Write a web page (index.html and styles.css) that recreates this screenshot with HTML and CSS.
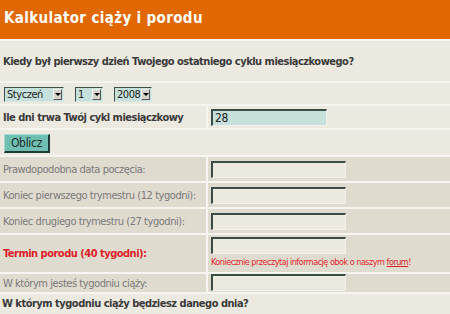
FILE: index.html
```html
<!DOCTYPE html>
<html lang="pl">
<head>
<meta charset="utf-8">
<title>Kalkulator ciąży i porodu</title>
<link rel="stylesheet" href="styles.css">
</head>
<body>
<div class="calc">
  <h1 class="head full">Kalkulator ciąży i porodu</h1>
  <div class="cell full q">Kiedy był pierwszy dzień Twojego ostatniego cyklu miesiączkowego?</div>
  <div class="cell full sels">
    <span class="sel w-month"><select class="sel-input"><option>Styczeń</option></select><span class="sel-arrow"><i></i></span></span>
    <span class="sel w-day"><select class="sel-input"><option>1</option></select><span class="sel-arrow"><i></i></span></span>
    <span class="sel w-year"><select class="sel-input"><option>2008</option></select><span class="sel-arrow"><i></i></span></span>
  </div>
  <div class="cell q lbl-cycle">Ile dni trwa Twój cykl miesiączkowy</div>
  <div class="cell val"><input class="inp inp-cycle" type="text" value="28"></div>
  <div class="cell full btn-row"><button class="btn" type="button">Oblicz</button></div>
  <div class="cell res lbl">Prawdopodobna data poczęcia:</div>
  <div class="cell res val"><input class="inp" type="text"></div>
  <div class="cell res lbl">Koniec pierwszego trymestru (12 tygodni):</div>
  <div class="cell res val"><input class="inp" type="text"></div>
  <div class="cell res lbl">Koniec drugiego trymestru (27 tygodni):</div>
  <div class="cell res val"><input class="inp" type="text"></div>
  <div class="cell res lbl lbl-red">Termin porodu (40 tygodni):</div>
  <div class="cell res val val-col"><input class="inp" type="text"><span class="note">Koniecznie przeczytaj informację obok o naszym <a href="#" class="note-link">forum</a>!</span></div>
  <div class="cell res lbl">W którym jesteś tygodniu ciąży:</div>
  <div class="cell res val val-last"><input class="inp" type="text"></div>
  <div class="cell full q q-last">W którym tygodniu ciąży będziesz danego dnia?</div>
</div>
</body>
</html>
```

FILE: styles.css
```css
html, body {
  margin: 0;
  padding: 0;
  background: #ece9e0;
}
body {
  font-family: "DejaVu Sans Condensed", "DejaVu Sans", sans-serif;
  font-stretch: condensed;
  font-size: 11px;
  letter-spacing: -0.45px;
  color: #333;
  width: 450px;
  height: 314px;
  overflow: hidden;
}
.calc {
  display: grid;
  grid-template-columns: 206px 1fr;
  grid-template-rows: 39px 40px 21px 22px 25px 24px 24px 24px 37px 18px 24px;
  gap: 2px;
  background: #f7f5ef;
}
.full { grid-column: 1 / -1; }
.head {
  margin: 0;
  background: #e16700;
  color: #fff;
  font-size: 15px;
  font-weight: bold;
  display: flex;
  align-items: center;
  padding: 0 0 4px 4px;
  letter-spacing: 0.35px;
}
.cell {
  background: #ece9e0;
  display: flex;
  align-items: center;
  padding-left: 3px;
}
.q {
  font-weight: bold;
  color: #3a3a3a;
  letter-spacing: -0.5px;
}
.sels {
  padding-left: 4px;
  gap: 11px;
  padding-top: 2px;
}
.sel {
  display: inline-flex;
  align-items: center;
  height: 15px;
  box-sizing: border-box;
  background: #c6e1db;
  border-top: 1px solid #3e4f4a;
  border-left: 1px solid #3e4f4a;
  border-right: 1px solid #d8e8e4;
  border-bottom: 1px solid #d8e8e4;
  padding-right: 1px;
}
.w-month { width: 60px; }
.w-day { width: 28px; }
.w-year { width: 38px; }
.sel-input {
  appearance: none;
  -webkit-appearance: none;
  border: 0;
  background: transparent;
  font: inherit;
  font-size: 11px;
  letter-spacing: -0.45px;
  color: #222;
  padding: 0 0 0 2px;
  margin: 0;
  flex: 1;
  min-width: 0;
  height: 13px;
  line-height: 13px;
  outline: none;
}
.sel-arrow {
  width: 9px;
  height: 11px;
  box-sizing: border-box;
  background: #d6d3cb;
  border-top: 1px solid #f4f2ec;
  border-left: 1px solid #f4f2ec;
  border-right: 1px solid #555;
  border-bottom: 1px solid #555;
  display: flex;
  align-items: center;
  justify-content: center;
}
.sel-arrow i {
  width: 0;
  height: 0;
  border-left: 3px solid transparent;
  border-right: 3px solid transparent;
  border-top: 3px solid #000;
}
.val { padding-left: 3px; }
.inp {
  box-sizing: border-box;
  width: 135px;
  height: 17px;
  margin: 0;
  padding: 0 2px;
  font: inherit;
  font-size: 12px;
  letter-spacing: -0.3px;
  color: #222;
  background: #ece9df;
  border-top: 2px solid #3b4c47;
  border-left: 2px solid #3b4c47;
  border-right: 1px solid #f2f0ea;
  border-bottom: 1px solid #f2f0ea;
  outline: none;
}
.inp-cycle {
  width: 116px;
  background: #c6e1db;
  line-height: 13px;
}
.btn-row { padding-left: 4px; }
.btn {
  box-sizing: border-box;
  width: 46px;
  height: 19px;
  margin-top: 1px;
  padding: 0;
  font: inherit;
  font-size: 12px;
  letter-spacing: -0.3px;
  color: #1e2e2b;
  background: #6fbfb3;
  border-top: 1px solid #a8dcd3;
  border-left: 1px solid #a8dcd3;
  border-right: 2px solid #1f3b35;
  border-bottom: 2px solid #1f3b35;
}
.res { background: #dfdbcf; }
.lbl { color: #7a7a7a; }
.lbl-red {
  color: #dc1f2a;
  font-weight: bold;
  letter-spacing: -0.5px;
}
.val-col {
  flex-direction: column;
  align-items: flex-start;
  justify-content: flex-start;
  padding-top: 2px;
}
.val-last { align-items: flex-start; padding-top: 0; }
.note {
  font-size: 9px;
  color: #e0252d;
  margin-top: 3px;
  letter-spacing: -0.5px;
}
.note-link {
  color: #d8232b;
  text-decoration: underline;
}
.q-last {
  align-items: flex-start;
  padding-top: 3px;
  padding-left: 2px;
}
```
